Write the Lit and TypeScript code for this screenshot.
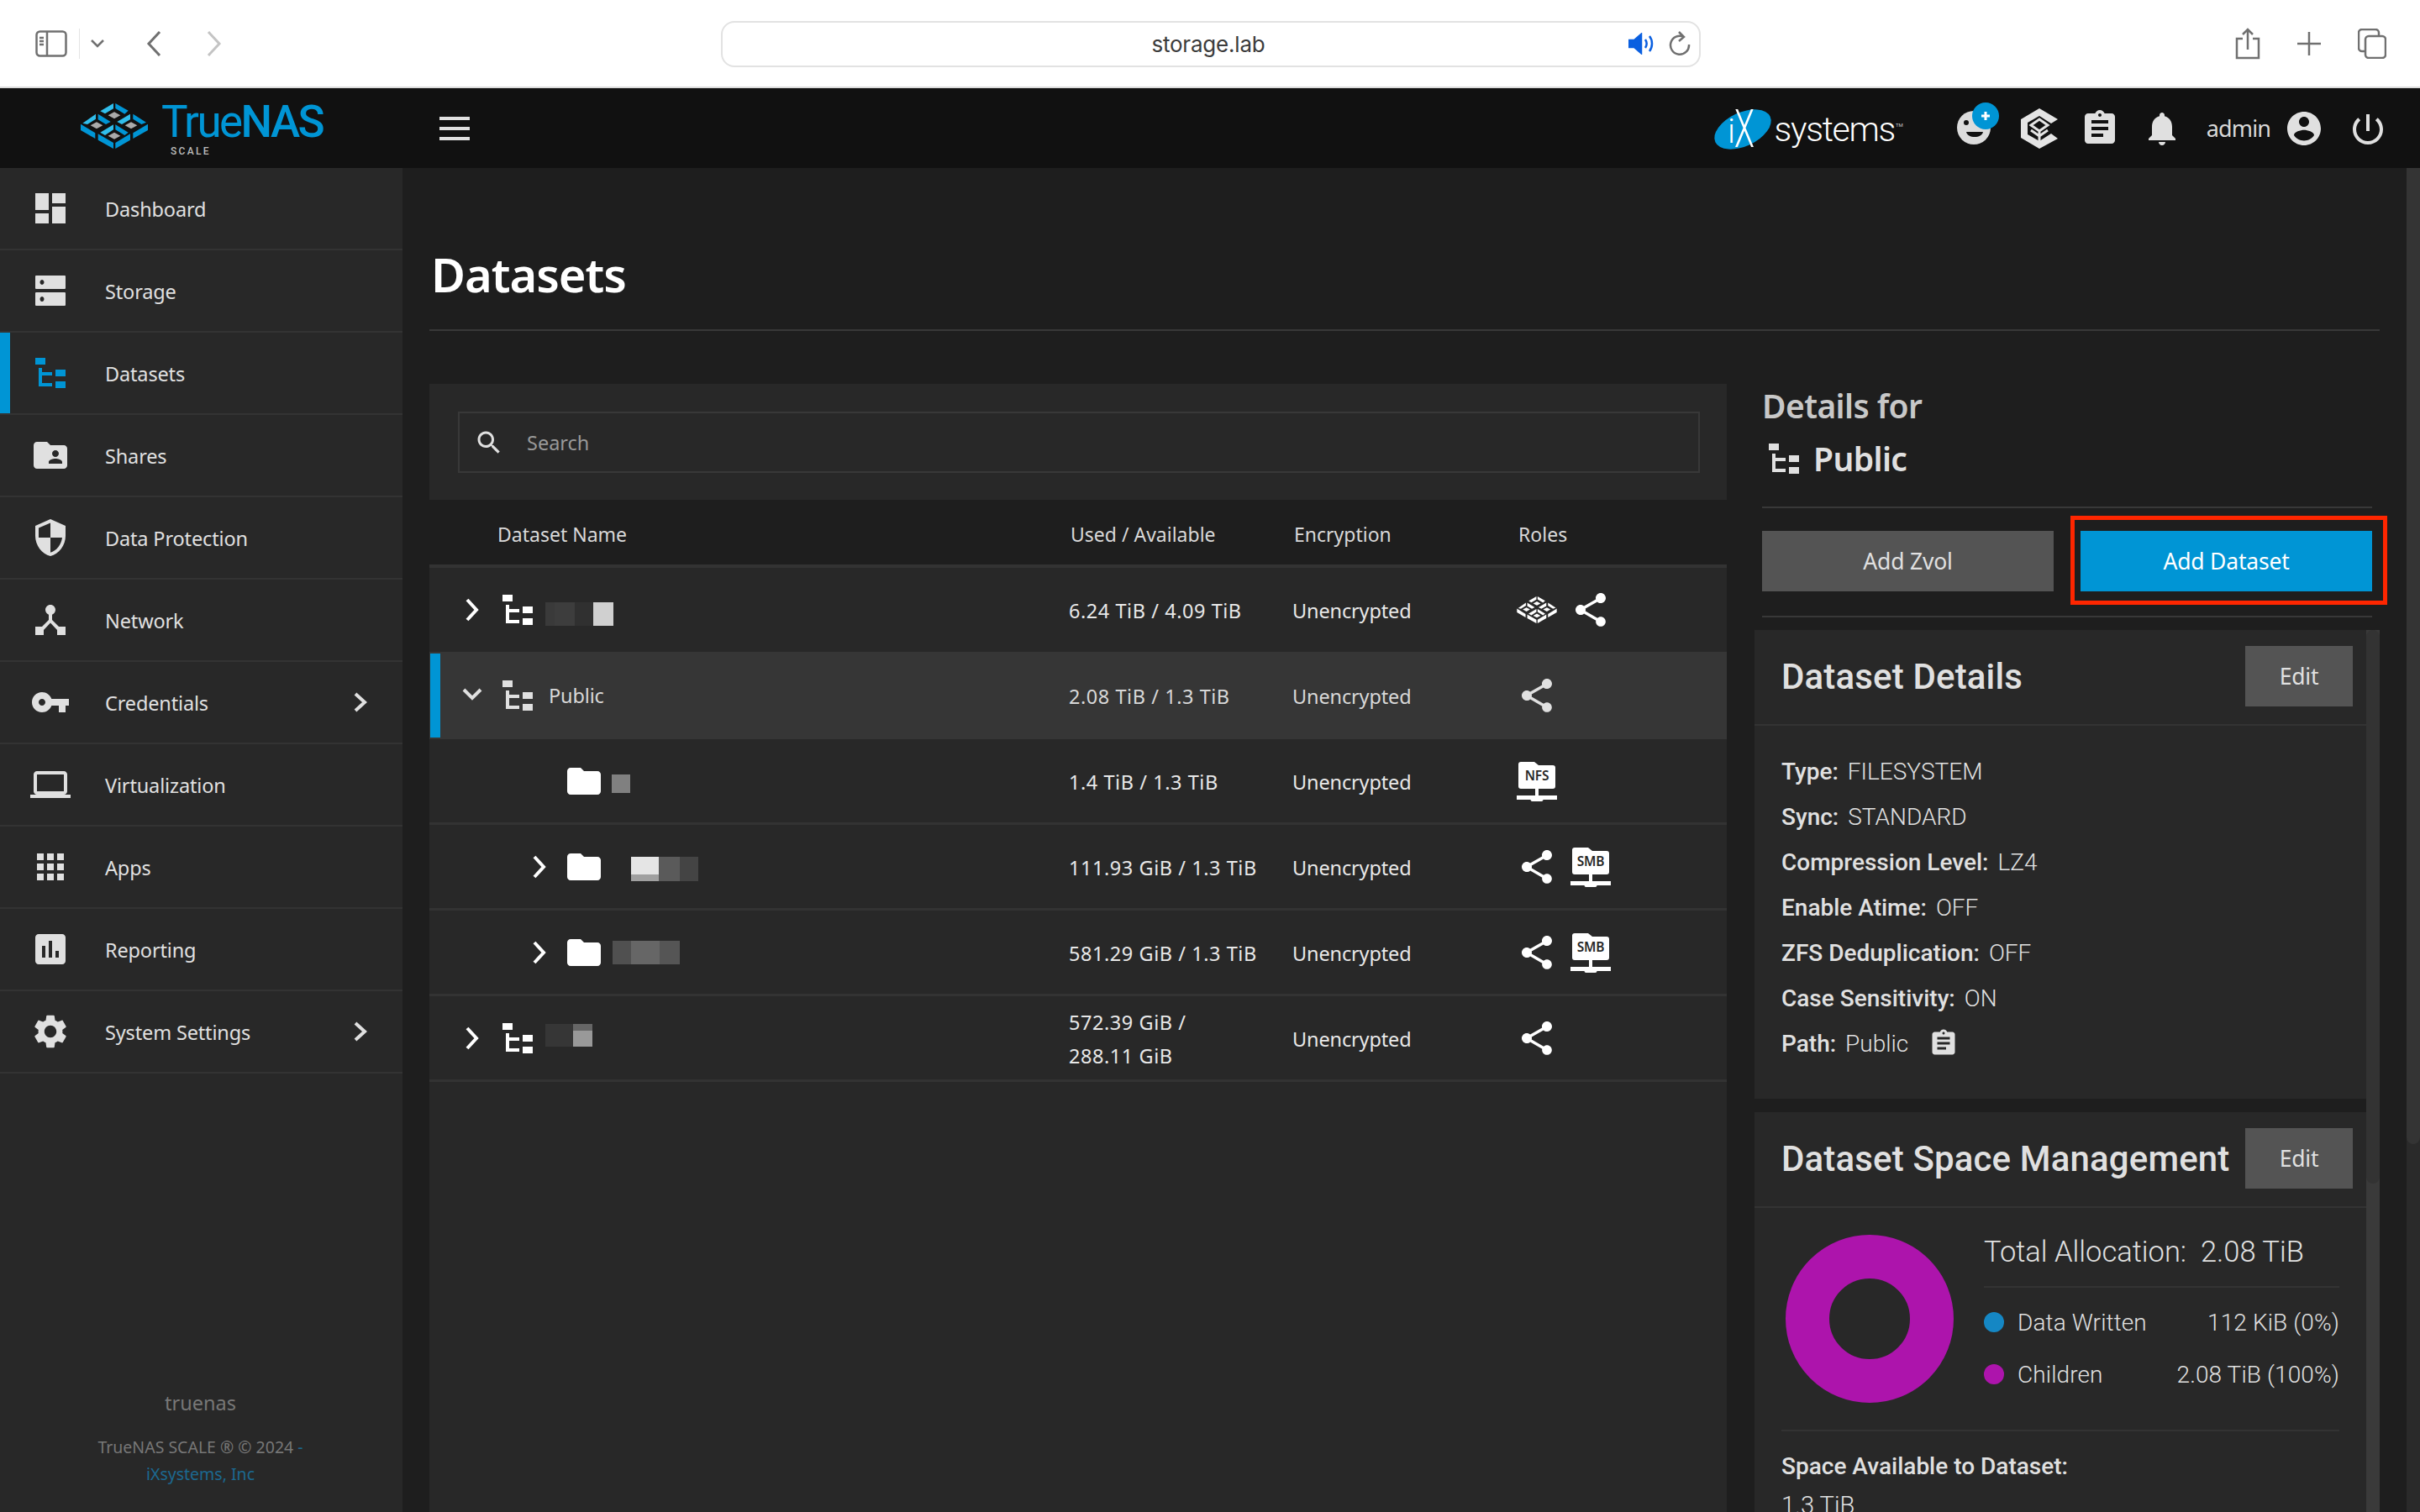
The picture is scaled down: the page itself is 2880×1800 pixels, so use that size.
import { LitElement, html, css, svg } from "lit";
import { customElement } from "lit/decorators.js";

const P = {
  dashboard: "M3 13h8V3H3v10zm0 8h8v-6H3v6zm10 0h8V11h-8v10zm0-18v6h8V3h-8z",
  shares: "M20 6h-8l-2-2H4c-1.1 0-1.99.9-1.99 2L2 18c0 1.1.9 2 2 2h16c1.1 0 2-.9 2-2V8c0-1.1-.9-2-2-2zm-5 3c1.1 0 2 .9 2 2s-.9 2-2 2-2-.9-2-2 .9-2 2-2zm4 8h-8v-1c0-1.33 2.67-2 4-2s4 .67 4 2v1z",
  shield: "M12 1L3 5v6c0 5.55 3.84 10.74 9 12 5.16-1.26 9-6.45 9-12V5l-9-4zm0 10.99h7c-.53 4.12-3.28 7.79-7 8.94V12H5V6.3l7-3.11v8.8z",
  network: "M17 16l-4-4V8.82C14.16 8.4 15 7.3 15 6c0-1.66-1.34-3-3-3S9 4.34 9 6c0 1.3.84 2.4 2 2.82V12l-4 4H3v5h5v-3.05l4-4.2 4 4.2V21h5v-5h-4z",
  key: "M12.65 10C11.83 7.67 9.61 6 7 6c-3.31 0-6 2.69-6 6s2.69 6 6 6c2.61 0 4.83-1.67 5.65-4H17v4h4v-4h2v-4H12.65zM7 14c-1.1 0-2-.9-2-2s.9-2 2-2 2 .9 2 2-.9 2-2 2z",
  laptop: "M20 18c1.1 0 1.99-.9 1.99-2L22 6c0-1.1-.9-2-2-2H4c-1.1 0-2 .9-2 2v10c0 1.1.9 2 2 2H0v2h24v-2h-4zM4 6h16v10H4V6z",
  apps: "M4 8h4V4H4v4zm6 12h4v-4h-4v4zm-6 0h4v-4H4v4zm0-6h4v-4H4v4zm6 0h4v-4h-4v4zm6-10v4h4V4h-4zm-6 4h4V4h-4v4zm6 6h4v-4h-4v4zm0 6h4v-4h-4v4z",
  report: "M19 3H5c-1.1 0-2 .9-2 2v14c0 1.1.9 2 2 2h14c1.1 0 2-.9 2-2V5c0-1.1-.9-2-2-2zM9 17H7v-7h2v7zm4 0h-2V7h2v10zm4 0h-2v-4h2v4z",
  gear: "M19.14 12.94c.04-.3.06-.61.06-.94 0-.32-.02-.64-.07-.94l2.03-1.58c.18-.14.23-.41.12-.61l-1.92-3.32c-.12-.22-.37-.29-.59-.22l-2.39.96c-.5-.38-1.03-.7-1.62-.94l-.36-2.54c-.04-.24-.24-.41-.48-.41h-3.84c-.24 0-.43.17-.47.41l-.36 2.54c-.59.24-1.13.57-1.62.94l-2.39-.96c-.22-.08-.47 0-.59.22L2.74 8.87c-.12.21-.08.47.12.61l2.03 1.58c-.05.3-.09.63-.09.94s.02.64.07.94l-2.03 1.58c-.18.14-.23.41-.12.61l1.92 3.32c.12.22.37.29.59.22l2.39-.96c.5.38 1.03.7 1.62.94l.36 2.54c.05.24.24.41.48.41h3.84c.24 0 .44-.17.47-.41l.36-2.54c.59-.24 1.13-.56 1.62-.94l2.39.96c.22.08.47 0 .59-.22l1.92-3.32c.12-.22.07-.47-.12-.61l-2.01-1.58zM12 15.6c-1.98 0-3.6-1.62-3.6-3.6s1.62-3.6 3.6-3.6 3.6 1.62 3.6 3.6-1.62 3.6-3.6 3.6z",
  clip: "M19 3h-4.18C14.4 1.84 13.3 1 12 1c-1.3 0-2.4.84-2.82 2H5c-1.1 0-2 .9-2 2v14c0 1.1.9 2 2 2h14c1.1 0 2-.9 2-2V5c0-1.1-.9-2-2-2zm-7 0c.55 0 1 .45 1 1s-.45 1-1 1-1-.45-1-1 .45-1 1-1zm2 14H7v-2h7v2zm3-4H7v-2h10v2zm0-4H7V7h10v2z",
  bell: "M12 22c1.1 0 2-.9 2-2h-4c0 1.1.89 2 2 2zm6-6v-5c0-3.07-1.64-5.64-4.5-6.32V4c0-.83-.67-1.5-1.5-1.5s-1.5.67-1.5 1.5v.68C7.63 5.36 6 7.92 6 11v5l-2 2v1h16v-1l-2-2z",
  account: "M12 2C6.48 2 2 6.48 2 12s4.48 10 10 10 10-4.48 10-10S17.52 2 12 2zm0 3c1.66 0 3 1.34 3 3s-1.34 3-3 3-3-1.34-3-3 1.34-3 3-3zm0 14.2c-2.5 0-4.71-1.28-6-3.22.03-1.99 4-3.08 6-3.08 1.99 0 5.97 1.09 6 3.08-1.29 1.94-3.5 3.22-6 3.22z",
  power: "M13 3h-2v10h2V3zm4.83 2.17l-1.42 1.42C17.99 7.86 19 9.81 19 12c0 3.87-3.13 7-7 7s-7-3.13-7-7c0-2.19 1.01-4.14 2.58-5.42L6.17 5.17C4.23 6.82 3 9.26 3 12c0 4.97 4.03 9 9 9s9-4.03 9-9c0-2.74-1.23-5.18-3.17-6.83z",
  share: "M18 16.08c-.76 0-1.44.3-1.96.77L8.91 12.7c.05-.23.09-.46.09-.7s-.04-.47-.09-.7l7.05-4.11c.54.5 1.25.81 2.04.81 1.66 0 3-1.34 3-3s-1.34-3-3-3-3 1.34-3 3c0 .24.04.47.09.7L8.04 9.81C7.5 9.31 6.79 9 6 9c-1.66 0-3 1.34-3 3s1.34 3 3 3c.79 0 1.5-.31 2.04-.81l7.12 4.16c-.05.21-.08.43-.08.65 0 1.61 1.31 2.92 2.92 2.92 1.61 0 2.92-1.31 2.92-2.92s-1.31-2.92-2.92-2.92z",
  folder: "M10 4H4c-1.1 0-1.99.9-1.99 2L2 18c0 1.1.9 2 2 2h16c1.1 0 2-.9 2-2V8c0-1.1-.9-2-2-2h-8l-2-2z",
  search: "M15.5 14h-.79l-.28-.27C15.41 12.59 16 11.11 16 9.5 16 5.91 13.09 3 9.5 3S3 5.91 3 9.5 5.91 16 9.5 16c1.61 0 3.09-.59 4.23-1.57l.27.28v.79l5 4.99L20.49 19l-4.99-5zm-6 0C7.01 14 5 11.99 5 9.5S7.01 5 9.5 5 14 7.01 14 9.5 11.99 14 9.5 14z",
};

const mi = (d: string, cls = "") => html`<svg class="mi ${cls}" viewBox="0 0 24 24"><path d=${d}></path></svg>`;

const storageIcon = html`<svg class="mi" viewBox="0 0 48 48"><path fill-rule="evenodd" d="M7 6h34a1 1 0 0 1 1 1v14a1 1 0 0 1-1 1H7a1 1 0 0 1-1-1V7a1 1 0 0 1 1-1zm7 5a2.5 3 0 1 0 .01 0zM7 26h34a1 1 0 0 1 1 1v14a1 1 0 0 1-1 1H7a1 1 0 0 1-1-1V27a1 1 0 0 1 1-1zm7 5a2.5 3 0 1 0 .01 0z"></path></svg>`;

const datasetIcon = (cls = "") => html`<svg class="ds ${cls}" viewBox="0 0 36 36"><path d="M0 0h12v8H0zM4 12h4v5h12v4H8v9h12v4H4zM24 14h12v8H24zM24 28h12v8H24z"></path></svg>`;

const logoLight = ["118,82 165,54 165,73 135,91", "55,125 102,92 102,110 72,129", "178,120 225,92 225,112 195,129", "118,158 165,130 165,148 135,168"];
const logoDark = ["172,54 218,80 205,92 172,72", "110,92 155,120 138,129 110,112", "235,92 282,122 265,129 235,110", "172,130 218,158 205,168 172,148"];
const logoSide = ["48,128 100,160 100,180 48,150", "110,163 165,195 165,216 110,185", "172,195 225,163 225,185 172,216", "235,160 288,128 288,150 235,180"];
const logoGrey = ["168,85 190,97 168,109 146,97", "105,121 127,133 105,145 83,133", "228,121 250,133 228,145 206,133", "168,158 190,170 168,182 146,170"];
const logoMark = (cls: string, light: string, dark: string, grey: string) => html`<svg class=${cls} viewBox="48 54 240 162">
  ${logoLight.map((p) => svg`<polygon points=${p} fill=${light}></polygon>`)}
  ${logoDark.map((p) => svg`<polygon points=${p} fill=${dark}></polygon>`)}
  ${logoSide.map((p) => svg`<polygon points=${p} fill=${dark}></polygon>`)}
  ${logoGrey.map((p) => svg`<polygon points=${p} fill=${grey}></polygon>`)}
</svg>`;

const shareFolder = (label: string) => html`<svg class="role" viewBox="0 0 48 48">
  <path d="M2 4a3 3 0 0 1 3-3h16l5 4h17a3 3 0 0 1 3 3v22a3 3 0 0 1-3 3H5a3 3 0 0 1-3-3z"></path>
  <path d="M22 33h4v8h22v5H31.500a2 2 0 0 1-2 2h-11a2 2 0 0 1-2-2H0v-5h22z"></path>
  <text x="24" y="23" text-anchor="middle" class="roletxt">${label}</text>
</svg>`;

type Row = {
  level: number; kind: "root" | "folder"; open?: boolean; leaf?: boolean; selected?: boolean; name?: string;
  gap: number; dy?: number; blocks?: [number, string][]; blockH?: number; used: unknown; roles: string[];
};

const rows: Row[] = [
  { level: 1, kind: "root", gap: 15, dy: 10, blockH: 28, blocks: [[11, "#3a3a3a"], [24, "#3d3d3d"], [22, "#303030"], [24, "#d0d0d0"]], used: "6.24 TiB / 4.09 TiB", roles: ["logo", "share"] },
  { level: 1, kind: "root", open: true, selected: true, gap: 19, name: "Public", used: "2.08 TiB / 1.3 TiB", roles: ["share"] },
  { level: 2, kind: "folder", leaf: true, gap: 9, dy: 6, blockH: 22, blocks: [[22, "#808080"]], used: "1.4 TiB / 1.3 TiB", roles: ["nfs"] },
  { level: 2, kind: "folder", gap: 32, dy: 6, blockH: 29, blocks: [[33, "linear-gradient(#e5e5e5 72%, #a0a0a0 72%)"], [25, "#5a5a5a"], [22, "#444444"]], used: "111.93 GiB / 1.3 TiB", roles: ["share", "smb"] },
  { level: 2, kind: "folder", gap: 10, dy: 0, blockH: 28, blocks: [[22, "#505050"], [34, "#666666"], [24, "#555555"]], used: "581.29 GiB / 1.3 TiB", roles: ["share", "smb"] },
  { level: 1, kind: "root", gap: 15, dy: -6, blockH: 27, blocks: [[33, "#363636"], [23, "linear-gradient(#666666 30%, #999999 30%)"]], used: html`572.39 GiB /<br />288.11 GiB`, roles: ["share"] },
];

const nav: { label: string; icon: unknown; active?: boolean; more?: boolean }[] = [
  { label: "Dashboard", icon: mi(P.dashboard) },
  { label: "Storage", icon: storageIcon },
  { label: "Datasets", icon: datasetIcon("navds"), active: true },
  { label: "Shares", icon: mi(P.shares) },
  { label: "Data Protection", icon: mi(P.shield) },
  { label: "Network", icon: mi(P.network) },
  { label: "Credentials", icon: mi(P.key), more: true },
  { label: "Virtualization", icon: mi(P.laptop) },
  { label: "Apps", icon: mi(P.apps) },
  { label: "Reporting", icon: mi(P.report) },
  { label: "System Settings", icon: mi(P.gear), more: true },
];

const details: [string, string][] = [
  ["Type:", "FILESYSTEM"], ["Sync:", "STANDARD"], ["Compression Level:", "LZ4"], ["Enable Atime:", "OFF"],
  ["ZFS Deduplication:", "OFF"], ["Case Sensitivity:", "ON"], ["Path:", "Public"],
];

@customElement("app-root")
export class AppRoot extends LitElement {
  static styles = css`
    :host { display: block; width: 2880px; height: 1800px; overflow: hidden; background: #1e1e1e; font-family: "Noto Sans", Roboto, sans-serif; color: #e0e0e0; --blue: #0095d5; }
    * { box-sizing: border-box; }
    svg { display: block; flex: none; }
    .mi { width: 48px; height: 48px; fill: #e0e0e0; }

    .browser { height: 105px; background: #fff; border-bottom: 2px solid #dcdcdc; display: flex; align-items: center; padding: 0 40px; }
    .browser svg { fill: none; stroke: #707070; stroke-width: 2.500; }
    .sep { width: 1px; height: 36px; background: #e4e4e4; margin: 0 13px 0 14px; }
    .bl { flex: 1; display: flex; align-items: center; padding-left: 2px; }
    .addr { width: 1166px; height: 55px; border: 2px solid #e2e2e2; border-radius: 16px; display: flex; align-items: center; padding: 0 10px 0 80px; margin-top: 1px; }
    .addr span { flex: 1; text-align: center; font: 400 26px Inter, sans-serif; color: #3c3c3c; letter-spacing: -0.2px; padding-right: 2px; }
    .addr .spk { margin-right: 3px; stroke: #0a5fe0; }
    .br { flex: 1; display: flex; align-items: center; justify-content: flex-end; gap: 44px; }

    .top { height: 95px; background: #111; display: flex; align-items: center; }
    .brand { display: flex; width: 523px; flex: none; padding-left: 96px; align-items: flex-start; height: 95px; padding-top: 18px; gap: 16px; overflow: hidden; }
    .markb { width: 80px; height: 54px; }
    .bname { display: flex; flex-direction: column; }
    .tn { font: 400 53px/50px Roboto, sans-serif; color: var(--blue); letter-spacing: -2.6px; margin-top: -3px; }
    .tn b { font-weight: 500; }
    .sc { font: 500 12px/12px Roboto, sans-serif; letter-spacing: 2.300px; color: #bbb; padding-left: 11px; margin-top: 4px; }
    .burger { width: 36px; height: 28px; display: flex; flex-direction: column; justify-content: space-between; }
    .burger i { display: block; height: 4px; background: #e0e0e0; }
    .topr { flex: 1; display: flex; align-items: center; justify-content: flex-end; padding-right: 38px; }
    .ix { display: flex; align-items: center; margin-right: 64px; margin-top: 2px; }
    .ixe { width: 68px; height: 50px; overflow: visible; }
    .ixl { font-family: Roboto, sans-serif; font-weight: 300; fill: #fff; }
    .ixt { font: 300 41px/50px Roboto, sans-serif; color: #fff; margin-left: 4px; letter-spacing: -1.300px; }
    .tm { font: 400 6px Roboto, sans-serif; color: #ccc; align-self: flex-start; margin-top: 16px; margin-left: 1px; }
    .face { margin: -9px 20px 0 0; }
    .tc { margin: 0 26px 0 0; }
    .admin { font-size: 27px; color: #d8d8d8; margin: 0 16px 0 29px; letter-spacing: -0.9px; }

    .body { display: flex; height: 1600px; }
    .side { width: 479px; flex: none; background: #282828; display: flex; flex-direction: column; }
    .nav { height: 98px; display: flex; align-items: center; border-bottom: 2px solid #333; padding-left: 36px; position: relative; font-size: 23.500px; letter-spacing: -0.15px; }
    .nav .lbl { margin-left: 41px; flex: 1; padding-top: 2px; }
    .nav.on::before { content: ""; position: absolute; left: 0; top: 0; bottom: 0; width: 12px; background: var(--blue); }
    .ds { width: 36px; height: 36px; fill: #fff; }
    .navds { fill: var(--blue); margin: 0 6px 0 6px; }
    .chev { width: 16px; height: 24px; fill: none; stroke: #e0e0e0; stroke-width: 4px; margin-right: 42px; }
    .foot { margin-top: auto; text-align: center; padding-bottom: 29px; color: #777; font-size: 19.500px; line-height: 32px; padding-right: 2px; }
    .foot .host { font-size: 23.500px; margin-bottom: 21px; line-height: 32px; }
    .foot a { color: #1c6890; }

    .main { flex: 1; display: flex; min-width: 0; }
    .content { flex: 1; padding: 0 32px; min-width: 0; display: flex; flex-direction: column; }
    .title { height: 194px; border-bottom: 2px solid #383838; display: flex; align-items: center; margin-bottom: 63px; padding-top: 60px; font: 600 56px "Noto Sans", sans-serif; color: #fff; padding-left: 2px; letter-spacing: -1px; }
    .outer-sb { width: 16px; flex: none; background: #2a2a2a; }
    .outer-sb i { display: block; height: 1162px; background: #343434; border-radius: 0 0 8px 8px; }
    .cols { display: flex; flex: 1; min-height: 0; gap: 33px; }

    .left { width: 1544px; flex: none; background: #282828; display: flex; flex-direction: column; }
    .searchz { height: 138px; padding: 33px 32px 32px 34px; }
    .sbox { height: 73px; border: 2px solid #383838; display: flex; align-items: center; padding-left: 17px; gap: 27px; color: #999; font-size: 23.500px; }
    .sbox .mi { width: 36px; height: 36px; }
    .grid { display: grid; grid-template-columns: 761px 266px 267px 1fr; align-items: center; }
    .thead { height: 81px; background: #1e1e1e; border-bottom: 4px solid #333; font-size: 23px; color: #d8d8d8; padding-top: 4px; }
    .thead span:first-child { padding-left: 81px; }
    .thead span { padding-left: 2px; }
    .row { height: 102px; border-bottom: 3px solid #333; font-size: 23.500px; letter-spacing: -0.15px; color: #e8e8e8; line-height: 40px; }
    .row.first { height: 100px; border-bottom: 0; }
    .row.sel { background: #363636; height: 104px; border-top: 2px solid #363636; border-bottom: 2px solid #363636; position: relative; color: #d8d8d8; }
    .row.sel::before { content: ""; position: absolute; left: 1px; top: 0; bottom: 0; width: 12px; background: var(--blue); }
    .row .txt { padding-top: 2px; }
    .row .used { letter-spacing: 0.55px; }
    .name { display: flex; align-items: center; }
    .slot { width: 36px; height: 36px; display: flex; align-items: center; justify-content: center; flex: none; }
    .slot svg { fill: none; stroke: #fff; stroke-width: 4px; width: 36px; height: 36px; }
    .sel .slot svg { stroke: #e0e0e0; }
    .folder { width: 48px; height: 48px; fill: #fff; }
    .sel .ds { fill: #e0e0e0; }
    .blocks { display: flex; }
    .blocks i { display: block; height: 100%; }
    .roles { display: flex; gap: 16px; align-items: center; }
    .role { width: 48px; height: 48px; fill: #fff; }
    .rolelogo { width: 48px; height: 32px; }
    .roletxt { font: 600 15.500px "Noto Sans", sans-serif; fill: #282828; letter-spacing: -0.2px; }
    .sel .role { fill: #e0e0e0; }

    .right { flex: 1; min-width: 0; display: flex; flex-direction: column; }
    .rh { padding: 0 9px; }
    .df { height: 52px; font: 600 39px/52px "Noto Sans", sans-serif; color: #c8c8c8; letter-spacing: -0.6px; }
    .dp { display: flex; align-items: center; gap: 17px; height: 64px; font: 600 39px/64px "Noto Sans", sans-serif; color: #e0e0e0; letter-spacing: -0.6px; padding-left: 8px; margin: 5px 0 25px; }
    .dp .ds { fill: #e0e0e0; }
    .divid { height: 2px; background: #383838; }
    .btns { display: flex; justify-content: space-between; padding: 27px 0 29px; }
    .btn { background: #545454; height: 72px; display: flex; align-items: center; justify-content: center; font-size: 26.500px; letter-spacing: -0.2px; color: #e0e0e0; }
    .wide { width: 347px; }
    .prim { background: var(--blue); color: #fff; position: relative; }
    .prim::after { content: ""; position: absolute; inset: -18px -18px -16px -12px; border: 5px solid #ff2600; }
    .cardswrap { display: flex; flex: 1; min-height: 0; margin-top: 15px; }
    .cards { flex: none; width: 728px; display: flex; flex-direction: column; gap: 16px; font-family: Roboto, sans-serif; font-size: 28px; }
    .isb { width: 16px; flex: none; background: #3a3a3a; height: 1050px; }
    .isb i { display: block; height: 659px; background: #333; border-radius: 8px; }
    .card { background: #282828; }
    .chead { height: 114px; border-bottom: 2px solid #333; display: flex; align-items: center; justify-content: space-between; padding: 0 16px 2px 32px; font: 500 42px Roboto, sans-serif; letter-spacing: 0.15px; color: #e0e0e0; white-space: nowrap; }
    .edit { width: 128px; font-family: "Noto Sans", sans-serif; font-weight: 400; }
    .dbody { padding: 27px 32px 39px; }
    .dl { height: 54px; display: flex; align-items: center; gap: 11px; font-weight: 300; color: #e0e0e0; }
    .dl b { font-weight: 500; }
    .dl .mi { width: 36px; height: 36px; margin-left: 13px; }
    .sbody { display: flex; padding: 32px 32px 31px 37px; gap: 36px; }
    .donut { width: 200px; height: 200px; }
    .alloc { flex: 1; }
    .tot { border-bottom: 2px solid #333; height: 63px; font-size: 34.500px; font-weight: 300; line-height: 40px; margin-bottom: 10px; white-space: pre; }
    .lg { height: 62px; display: flex; align-items: center; font-size: 28px; font-weight: 300; letter-spacing: 0.1px; }
    .lg i { width: 24px; height: 24px; border-radius: 50%; margin-right: 16px; }
    .lg span { flex: 1; }
    .lg em { font-style: normal; }
    .sdiv { height: 2px; background: #333; margin: 1px 32px 0; }
    .avail { padding: 15px 32px; }
    .avail b { display: block; font-weight: 500; line-height: 54px; height: 54px; }
    .avail div { line-height: 38px; font-weight: 300; font-size: 29px; }
  `;

  private roleIcon(r: string) {
    if (r === "share") return html`<svg class="role" viewBox="0 0 24 24"><path d=${P.share}></path></svg>`;
    if (r === "logo") return logoMark("rolelogo", "#fff", "#fff", "#fff");
    return shareFolder(r.toUpperCase());
  }

  render() {
    return html`
      <div class="browser">
        <div class="bl">
          <svg width="38" height="32" viewBox="0 0 38 32"><rect x="1.500" y="1.500" width="35" height="29" rx="4"></rect><path d="M14 2v28M5 9h5M5 13h5M5 17h5"></path></svg>
          <div class="sep"></div>
          <svg width="16" height="10" viewBox="0 0 16 10"><path d="M1 1l7 7 7-7"></path></svg>
          <svg width="18" height="30" viewBox="0 0 18 30" style="margin-left:50px;stroke-width:3"><path d="M16 1L3 15l13 14"></path></svg>
          <svg width="18" height="30" viewBox="0 0 18 30" style="margin-left:54px;stroke:#c4c4c4;stroke-width:3"><path d="M2 1l13 14L2 29"></path></svg>
        </div>
        <div class="addr">
          <span>storage.lab</span>
          <svg class="spk" width="32" height="26" viewBox="0 0 32 26"><path d="M1 9h6l8-7v22l-8-7H1z" fill="#0a5fe0"></path><path d="M20 8c2 3 2 7 0 10M25 4c4 5 4 13 0 18"></path></svg>
          <svg width="26" height="30" viewBox="0 0 26 30" style="margin-left:13px"><path d="M18 7a11 11 0 1 0 6 9M12 1l6 6-6 5"></path></svg>
        </div>
        <div class="br">
          <svg width="30" height="38" viewBox="0 0 30 38"><path d="M9 13H2v23h26V13h-7M15 26V2M9 8l6-6 6 6"></path></svg>
          <svg width="28" height="28" viewBox="0 0 28 28"><path d="M14 0v28M0 14h28"></path></svg>
          <svg width="34" height="36" viewBox="0 0 34 36"><rect x="9" y="9" width="24" height="26" rx="4"></rect><path d="M9 27H5a4 4 0 0 1-4-4V5a4 4 0 0 1 4-4h16a4 4 0 0 1 4 4v4"></path></svg>
        </div>
      </div>

      <div class="top">
        <div class="brand">
          ${logoMark("markb", "#31beec", "#0095d5", "#aaaaaa")}
          <div class="bname">
            <div class="tn">True<b>NAS</b></div>
            <div class="sc">SCALE</div>
          </div>
        </div>
        <div class="burger"><i></i><i></i><i></i></div>
        <div class="topr">
          <div class="ix">
            <svg class="ixe" viewBox="0 0 68 50">
              <ellipse cx="34" cy="25" rx="36" ry="20" transform="rotate(-25 34 25)" fill="#0095d5"></ellipse>
              <text class="ixl" x="16" y="41" font-size="40">i</text>
              <text class="ixl" font-size="46" transform="translate(24 46) scale(0.85 1.35)">X</text>
            </svg>
            <span class="ixt">systems</span><span class="tm">TM</span>
          </div>
          <svg class="face" width="56" height="52" viewBox="0 0 56 52">
            <circle cx="20" cy="30" r="20" fill="#dcdcdc"></circle><circle cx="11" cy="24" r="3" fill="#111"></circle><path d="M11 35h20c-1 4-5 6-10 6s-9-2-10-6z" fill="#111"></path>
            <circle cx="34" cy="16" r="16" fill="#0095d5"></circle><path d="M34 11v10M29 16h10" stroke="#fff" stroke-width="3"></path>
          </svg>
          <svg class="tc" width="44" height="48" viewBox="0 0 44 48">
            <path fill="#e4e4e4" d="M22 0l22 13-8 5-14-9-14 8v14l14 8 14-9 8 6-22 12L0 35V13z"></path>
            <path fill="none" stroke="#e4e4e4" stroke-width="3" d="M22 13l10 7-10 7-10-7zM22 27v12M12 26l10 7 10-7"></path>
          </svg>
          ${mi(P.clip)}
          <div style="margin-left:26px">${mi(P.bell)}</div>
          <span class="admin">admin</span>
          ${mi(P.account)}
          <div style="margin-left:28px;margin-top:2px">${mi(P.power)}</div>
        </div>
      </div>

      <div class="body">
        <aside class="side">
          ${nav.map((n) => html`
            <div class="nav ${n.active ? "on" : ""}">
              ${n.icon}
              <span class="lbl">${n.label}</span>
              ${n.more ? html`<svg class="chev" viewBox="0 0 16 24"><path d="M2 2l11 10L2 22"></path></svg>` : ""}
            </div>`)}
          <div class="foot">
            <div class="host">truenas</div>
            <div>TrueNAS SCALE ® © 2024 <a>-</a></div>
            <div><a>iXsystems, Inc</a></div>
          </div>
        </aside>
        <div class="main">
          <div class="content">
            <div class="title">Datasets</div>
            <div class="cols">
              <section class="left">
                <div class="searchz"><div class="sbox">${mi(P.search)}<span>Search</span></div></div>
                <div class="grid thead"><span>Dataset Name</span><span>Used / Available</span><span>Encryption</span><span>Roles</span></div>
                ${rows.map((r, i) => html`
                  <div class="grid row ${r.selected ? "sel" : ""} ${i === 0 ? "first" : ""}">
                    <div class="name" style="padding-left:${r.level === 1 ? 33 : 113}px">
                      <div class="slot">
                        ${r.leaf ? "" : r.open
                          ? html`<svg viewBox="0 0 36 36"><path d="M8 11l10 10 10-10"></path></svg>`
                          : html`<svg viewBox="0 0 36 36"><path d="M12 6l11 12-11 12"></path></svg>`}
                      </div>
                      ${r.kind === "root"
                        ? html`<div style="margin-left:18px">${datasetIcon()}</div>`
                        : html`<svg class="folder" viewBox="0 0 24 24" style="margin-left:11px"><path d=${P.folder}></path></svg>`}
                      ${r.name ? html`<span style="margin-left:${r.gap}px">${r.name}</span>` : ""}
                      ${r.blocks ? html`<div class="blocks" style="margin-left:${r.gap}px;margin-top:${r.dy ?? 0}px;height:${r.blockH}px">${r.blocks.map((b) => html`<i style="width:${b[0]}px;background:${b[1]}"></i>`)}</div>` : ""}
                    </div>
                    <span class="txt used">${r.used}</span>
                    <span class="txt">Unencrypted</span>
                    <div class="roles">${r.roles.map((x) => this.roleIcon(x))}</div>
                  </div>`)}
              </section>
              <section class="right">
                <div class="rh">
                  <div class="df">Details for</div>
                  <div class="dp">${datasetIcon()}<span>Public</span></div>
                  <div class="divid"></div>
                  <div class="btns"><div class="btn wide">Add Zvol</div><div class="btn wide prim">Add Dataset</div></div>
                  <div class="divid"></div>
                </div>
                <div class="cardswrap">
                  <div class="cards">
                    <div class="card">
                      <div class="chead"><span>Dataset Details</span><div class="btn edit">Edit</div></div>
                      <div class="dbody">
                        ${details.map((d) => html`<div class="dl"><b>${d[0]}</b><span>${d[1]}</span>${d[0] === "Path:" ? mi(P.clip) : ""}</div>`)}
                      </div>
                    </div>
                    <div class="card">
                      <div class="chead"><span>Dataset Space Management</span><div class="btn edit">Edit</div></div>
                      <div class="sbody">
                        <svg class="donut" viewBox="0 0 200 200"><circle cx="100" cy="100" r="74" fill="none" stroke="#ad14ac" stroke-width="52"></circle></svg>
                        <div class="alloc">
                          <div class="tot">Total Allocation:  2.08 TiB</div>
                          <div class="lg"><i style="background:#1587c4"></i><span>Data Written</span><em>112 KiB (0%)</em></div>
                          <div class="lg"><i style="background:#ad14ac"></i><span>Children</span><em>2.08 TiB (100%)</em></div>
                        </div>
                      </div>
                      <div class="sdiv"></div>
                      <div class="avail"><b>Space Available to Dataset:</b><div>1.3 TiB</div></div>
                    </div>
                  </div>
                  <div class="isb"><i></i></div>
                </div>
              </section>
            </div>
          </div>
          <div class="outer-sb"><i></i></div>
        </div>
      </div>
    `;
  }
}
